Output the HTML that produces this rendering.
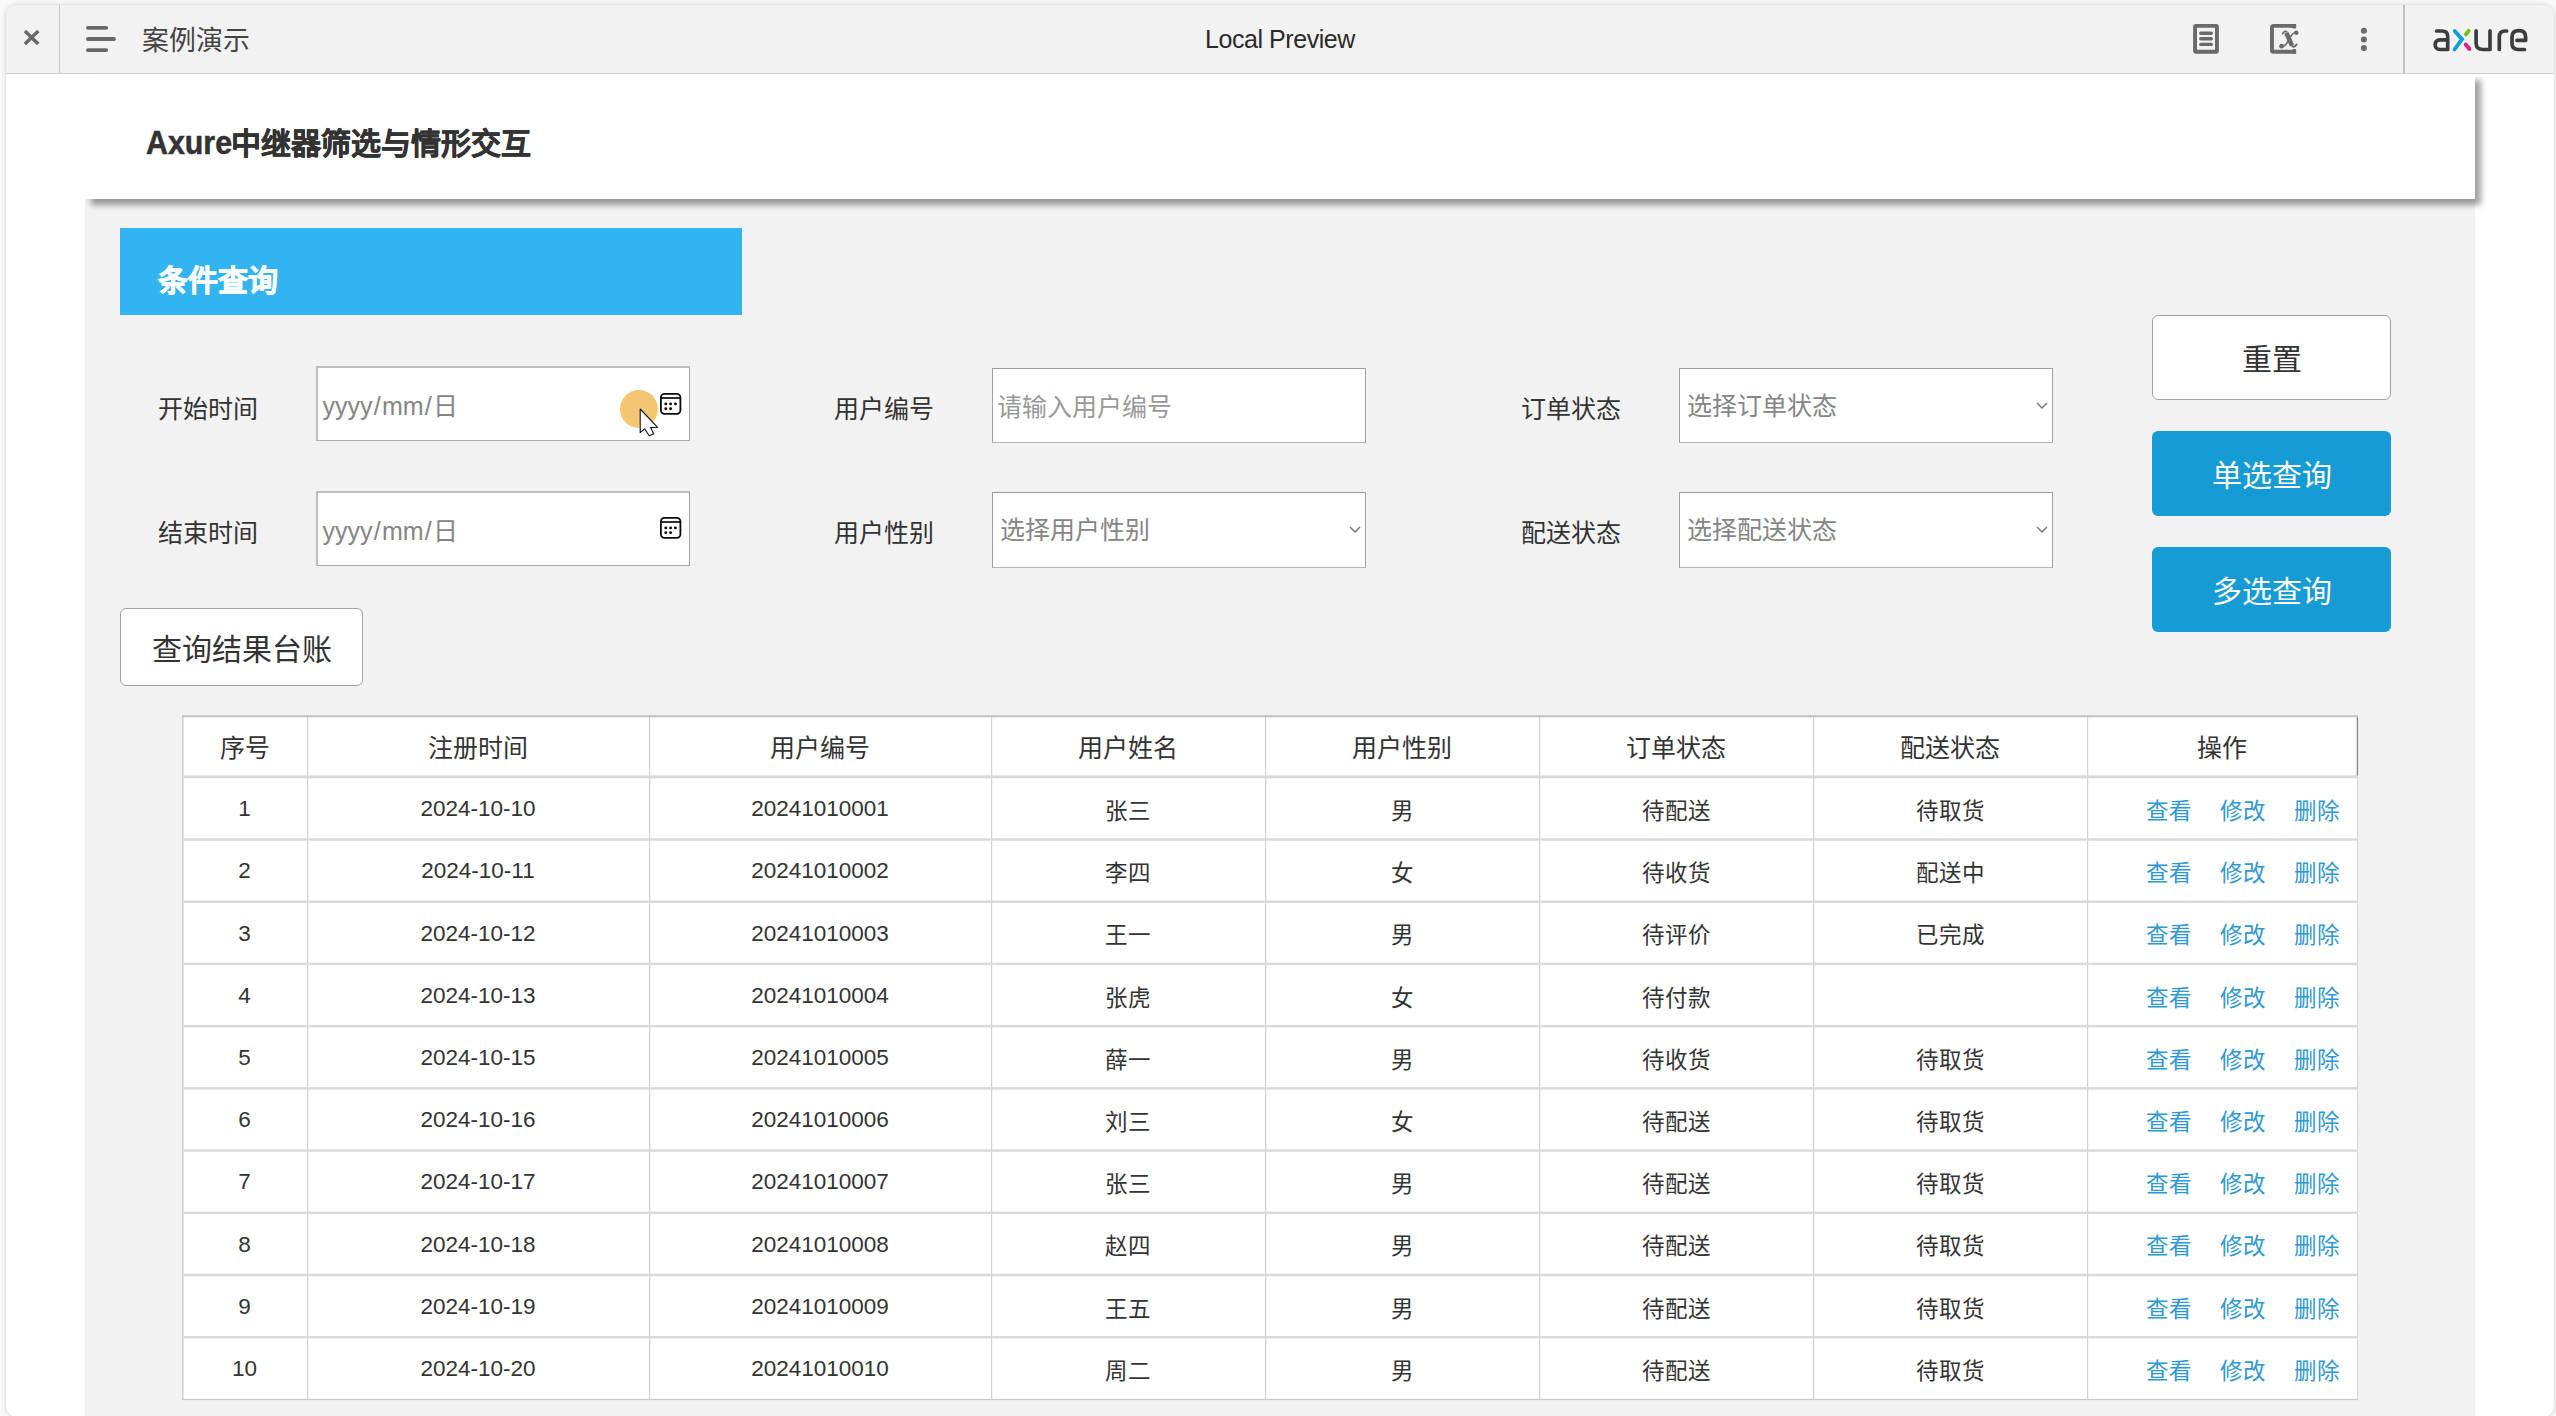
<!DOCTYPE html>
<html lang="zh-CN">
<head>
<meta charset="utf-8">
<title>案例演示</title>
<style>
*{box-sizing:border-box;margin:0;padding:0}
html,body{width:2556px;height:1416px;overflow:hidden}
body{background:#f9f9f9;font-family:"Liberation Sans",sans-serif;color:#333;position:relative}
.abs,.th,.td,.lk,.hl,.vl,.tbl,.lab,.inp,.btn{position:absolute}
#win{position:absolute;left:5px;top:4px;width:2550px;height:1413.5px;border:1px solid #e5e5e5;border-radius:12px;box-shadow:0 0 5px rgba(0,0,0,.10);background:#fff;overflow:hidden}
#bar{position:absolute;left:0;top:0;width:100%;height:69px;background:#f2f2f2;border-bottom:1px solid #cfcfcf}
#page{position:absolute;left:0;top:0;width:2556px;height:1416px}
.card{left:85px;top:74px;width:2390px;height:125px;background:#fff;box-shadow:6px 6px 6px rgba(0,0,0,.37)}
.panel{left:85px;top:199px;width:2390px;height:1217px;background:#f2f2f2}
.title{left:146px;top:124px;font-size:30px;font-weight:bold;color:#333;-webkit-text-stroke:.5px #333;line-height:40px;white-space:nowrap}
.blue{left:120px;top:228.4px;width:622px;height:86.9px;background:#31b4ef}
.blue span{position:absolute;left:38px;top:33px;font-size:30px;font-weight:bold;color:#fff;-webkit-text-stroke:.7px #fff;line-height:40px;white-space:nowrap}
.lab{font-size:25px;line-height:34px;color:#333;white-space:nowrap}
.inp{background:#fff;border:1px solid #a0a0a0;border-bottom:1.6px solid #b4b4b4;font-size:25px;color:#858585;white-space:nowrap}
.inp i{font-style:normal;margin:0 1.2px}
.inp span{position:absolute;top:50%;transform:translateY(-50%);line-height:34px}
.btn{border-radius:6px;font-size:30px;text-align:center;white-space:nowrap}
.btn.w{background:#fff;border:1px solid #a2a2a2;color:#333}
.btn.b{background:#169bd5;color:#fff}
.tbl{background:#fff}
.th{font-size:25px;line-height:59px;height:59px;text-align:center;color:#333;white-space:nowrap}
.td{font-size:22.5px;line-height:61px;height:61px;text-align:center;color:#333;white-space:nowrap}
.lk{font-size:22.5px;line-height:61px;height:61px;color:#2e98d2;white-space:nowrap}
.vl{width:1px}
.title b{display:inline-block;transform:scale(1.012,1.08);transform-origin:left 78%}
.inp.d{border:2px solid #bebebe;border-right:1.4px solid #a2a2a2;border-bottom:1.5px solid #ababab}
</style>
</head>
<body>
<div id="win">
<div id="bar"></div>
</div>
<div id="page">
<!-- toolbar -->
<div class="abs" style="left:59px;top:5px;width:1px;height:68px;background:#cbcbcb"></div>
<div class="abs" style="left:2403px;top:5px;width:1.5px;height:68px;background:#c2c2c2"></div>
<svg class="abs" style="left:20px;top:25px" width="24" height="24" viewBox="20 25 24 24"><path d="M24.9 31 L38.3 44.1 M38.3 31 L24.9 44.1" stroke="#6a6a6a" stroke-width="3.5" fill="none"/></svg>
<svg class="abs" style="left:85px;top:25px" width="32" height="28" viewBox="0 0 32 28"><path d="M2.9 2.8 H21.2 M2.9 14 H29 M2.9 25.1 H21.2" stroke="#696969" stroke-width="3.8" stroke-linecap="round" fill="none"/></svg>
<div class="abs" style="left:142px;top:22.8px;font-size:26.9px;line-height:36px;color:#444;white-space:nowrap">案例演示</div>
<div class="abs" style="left:1080px;top:21px;width:400px;text-align:center;font-size:25px;letter-spacing:-0.45px;line-height:36px;color:#2a2a2a;white-space:nowrap">Local Preview</div>
<!-- right icons -->
<svg class="abs" style="left:2192px;top:23px" width="28" height="32" viewBox="0 0 28 32"><rect x="3.05" y="2.85" width="21.9" height="25.9" rx="0.9" fill="none" stroke="#6a6a6a" stroke-width="3.9"/><path d="M8.8 10.2 H19.3 M8.8 15.8 H19.3 M8.8 21.4 H19.3" stroke="#6a6a6a" stroke-width="3.4" stroke-linecap="round"/></svg>
<svg class="abs" style="left:2269px;top:23px" width="34" height="32" viewBox="0 0 34 32"><path d="M27.1 2.85 H4.5 Q2.95 2.85 2.95 4.4 V27.2 Q2.95 28.75 4.5 28.75 H27.1" fill="none" stroke="#6a6a6a" stroke-width="3.9"/><rect x="23.4" y="0.9" width="3.7" height="4.7" rx="1" fill="#6a6a6a"/><rect x="23.4" y="26" width="3.7" height="4.7" rx="1" fill="#6a6a6a"/><g fill="none" stroke="#6a6a6a" stroke-linecap="round"><path d="M17.4 9.8 L23 22.6" stroke-width="4.6" stroke-linecap="butt"/><path d="M13.7 10.6 C14.6 8.6 16.2 8 17.6 8.6" stroke-width="1.7"/><path d="M22.6 22 C23.4 24.6 25.6 24.2 27.7 21.4" stroke-width="1.9"/><path d="M27 9.6 C24 8.6 22 13 20.2 16.3 C18.4 19.6 16 24.3 12.8 23.4" stroke-width="1.7"/></g><circle cx="27.3" cy="9.8" r="2.2" fill="#6a6a6a"/><circle cx="12.6" cy="23.2" r="2.4" fill="#6a6a6a"/></svg>
<svg class="abs" style="left:2358px;top:26px" width="12" height="28" viewBox="0 0 12 28"><circle cx="5.9" cy="4.8" r="3.05" fill="#6a6a6a"/><circle cx="5.9" cy="13.5" r="3.05" fill="#6a6a6a"/><circle cx="5.9" cy="22.1" r="3.05" fill="#6a6a6a"/></svg>
<!-- axure logo -->
<svg class="abs" style="left:2430px;top:24px" width="100" height="32" viewBox="0 0 100 32">
<g fill="none" stroke="#3d3d3d" stroke-width="3.7" stroke-linecap="round" stroke-linejoin="round">
<path d="M6.6 7 H12 C16 7 17.7 9 17.7 12.5 V25.5 H10 C3.5 25.5 3.5 15.8 10 15.8 H17.7"/>
<path d="M46.1 6.9 V19 C46.1 23.5 48 25.5 53 25.5 H60 V6.9"/>
<path d="M69.3 25.4 V13 C69.3 9 71 7 75 7 H76.6"/>
<path d="M87 16.4 H95.6 V13 C95.6 9 93.5 6.7 89 6.7 C84 6.7 82 9 82 13 V19.5 C82 23.5 84 25.5 88.5 25.5 H94.5"/>
</g>
<path d="M24.7 7 L32 15.2 L24.5 25.5" fill="none" stroke="#0f9fdb" stroke-width="3.8" stroke-linecap="round" stroke-linejoin="miter"/>
<path d="M38.6 6.9 L35.9 10.4" fill="none" stroke="#78be20" stroke-width="4" stroke-linecap="round"/>
<path d="M35.7 20.5 L39.4 24.9" fill="none" stroke="#e0218a" stroke-width="4" stroke-linecap="round"/>
</svg>

<!-- content -->
<div class="abs panel"></div>
<div class="abs card"></div>
<div class="abs title"><b>Axure</b>中继器筛选与情形交互</div>
<div class="abs blue"><span>条件查询</span></div>

<div class="lab" style="left:158px;top:392px">开始时间</div>
<div class="lab" style="left:158px;top:516px">结束时间</div>
<div class="lab" style="left:834px;top:392px">用户编号</div>
<div class="lab" style="left:834px;top:516px">用户性别</div>
<div class="lab" style="left:1521px;top:392px">订单状态</div>
<div class="lab" style="left:1521px;top:516px">配送状态</div>

<div class="inp d" style="left:316px;top:366px;width:374px;height:75px"><span style="left:4.6px;margin-top:2px">yyyy<i>/</i>mm<i>/</i>日</span></div>
<div class="inp d" style="left:316px;top:491px;width:374px;height:75px"><span style="left:4.6px;margin-top:2px">yyyy<i>/</i>mm<i>/</i>日</span></div>
<div class="inp" style="left:992px;top:368px;width:374px;height:75px;color:#999"><span style="left:4px;margin-top:1px">请输入用户编号</span></div>
<div class="inp" style="left:992px;top:492px;width:374px;height:76px"><span style="left:7px">选择用户性别</span></div>
<div class="inp" style="left:1679px;top:368px;width:374px;height:75px"><span style="left:7px">选择订单状态</span></div>
<div class="inp" style="left:1679px;top:492px;width:374px;height:76px"><span style="left:7px">选择配送状态</span></div>
<!-- chevrons -->
<svg class="abs" style="left:1348px;top:525px" width="14" height="9" viewBox="0 0 14 9"><path d="M2 2 L7 7 L12 2" fill="none" stroke="#777" stroke-width="1.5"/></svg>
<svg class="abs" style="left:2035px;top:401px" width="14" height="9" viewBox="0 0 14 9"><path d="M2 2 L7 7 L12 2" fill="none" stroke="#777" stroke-width="1.5"/></svg>
<svg class="abs" style="left:2035px;top:525px" width="14" height="9" viewBox="0 0 14 9"><path d="M2 2 L7 7 L12 2" fill="none" stroke="#777" stroke-width="1.5"/></svg>
<!-- calendar icons -->
<svg class="abs cal" style="left:658px;top:392px" width="24" height="24" viewBox="0 0 24 24"><rect x="2.9" y="1.9" width="19.5" height="20" rx="3.6" fill="none" stroke="#0a0a0a" stroke-width="1.8"/><path d="M2.9 6 H22.4" stroke="#0a0a0a" stroke-width="1.7"/><g fill="#0a0a0a"><circle cx="7.8" cy="11.9" r="1.45"/><circle cx="12.6" cy="11.9" r="1.45"/><circle cx="17.4" cy="11.9" r="1.45"/><circle cx="7.8" cy="16.7" r="1.45"/><circle cx="12.6" cy="16.7" r="1.45"/></g></svg>
<svg class="abs cal" style="left:658px;top:516px" width="24" height="24" viewBox="0 0 24 24"><rect x="2.9" y="1.9" width="19.5" height="20" rx="3.6" fill="none" stroke="#0a0a0a" stroke-width="1.8"/><path d="M2.9 6 H22.4" stroke="#0a0a0a" stroke-width="1.7"/><g fill="#0a0a0a"><circle cx="7.8" cy="11.9" r="1.45"/><circle cx="12.6" cy="11.9" r="1.45"/><circle cx="17.4" cy="11.9" r="1.45"/><circle cx="7.8" cy="16.7" r="1.45"/><circle cx="12.6" cy="16.7" r="1.45"/></g></svg>
<!-- cursor highlight -->
<div class="abs" style="left:620.1px;top:389.8px;width:38.2px;height:38.2px;border-radius:50%;background:#f5c671"></div>
<svg class="abs" style="left:638px;top:407px" width="22" height="32" viewBox="0 0 22 32"><path d="M2.2 2 V25.7 L6.6 21.8 L11.2 28.8 L15.7 26.8 L12.6 20.6 L19.6 20.3 Z" fill="#fff" stroke="#111" stroke-width="1.1" stroke-linejoin="round"/></svg>

<div class="btn w" style="left:2152px;top:315px;width:239px;height:85px;line-height:87px">重置</div>
<div class="btn b" style="left:2152px;top:431px;width:239px;height:85px;line-height:89px">单选查询</div>
<div class="btn b" style="left:2152px;top:547px;width:239px;height:85px;line-height:89px">多选查询</div>
<div class="btn w" style="left:120px;top:608px;width:243px;height:78px;line-height:82px">查询结果台账</div>
<div class="tbl" style="left:182px;top:715px;width:2176px;height:684.5px"></div>
<svg class="abs" style="left:180px;top:713px" width="2180" height="690" viewBox="0 0 2180 690"><rect x="2.00" y="2.0" width="1.60" height="685.0" fill="#d0d0d0"/><rect x="127.00" y="2.0" width="1.20" height="685.0" fill="#d2d2d2"/><rect x="469.00" y="2.0" width="1.20" height="685.0" fill="#d2d2d2"/><rect x="811.00" y="2.0" width="1.20" height="685.0" fill="#d2d2d2"/><rect x="1085.00" y="2.0" width="1.20" height="685.0" fill="#d2d2d2"/><rect x="1359.00" y="2.0" width="1.20" height="685.0" fill="#d2d2d2"/><rect x="1633.00" y="2.0" width="1.20" height="685.0" fill="#d2d2d2"/><rect x="1907.00" y="2.0" width="1.20" height="685.0" fill="#d2d2d2"/><rect x="2176.95" y="63.8" width="1.10" height="623.2" fill="#d4d4d4"/><rect x="2176.78" y="2.6" width="1.25" height="61.8" fill="#828282"/><rect x="2.0" y="2.10" width="2176.0" height="2.20" fill="#c6c6c6"/><rect x="2.0" y="62.35" width="2176.0" height="2.90" fill="#d8d8d8"/><rect x="2.0" y="125.25" width="2176.0" height="2.50" fill="#dadada"/><rect x="2.0" y="187.47" width="2176.0" height="2.50" fill="#dadada"/><rect x="2.0" y="249.69" width="2176.0" height="2.50" fill="#dadada"/><rect x="2.0" y="311.91" width="2176.0" height="2.50" fill="#dadada"/><rect x="2.0" y="374.13" width="2176.0" height="2.50" fill="#dadada"/><rect x="2.0" y="436.35" width="2176.0" height="2.50" fill="#dadada"/><rect x="2.0" y="498.57" width="2176.0" height="2.50" fill="#dadada"/><rect x="2.0" y="560.79" width="2176.0" height="2.50" fill="#dadada"/><rect x="2.0" y="623.01" width="2176.0" height="2.50" fill="#dadada"/><rect x="2.0" y="685.85" width="2176.0" height="1.30" fill="#cccccc"/></svg>
<div class="th" style="left:182px;top:719px;width:125px">序号</div>
<div class="th" style="left:307px;top:719px;width:342px">注册时间</div>
<div class="th" style="left:649px;top:719px;width:342px">用户编号</div>
<div class="th" style="left:991px;top:719px;width:274px">用户姓名</div>
<div class="th" style="left:1265px;top:719px;width:274px">用户性别</div>
<div class="th" style="left:1539px;top:719px;width:274px">订单状态</div>
<div class="th" style="left:1813px;top:719px;width:274px">配送状态</div>
<div class="th" style="left:2087px;top:719px;width:270px">操作</div>
<div class="td" style="left:182px;top:777.9px;width:125px">1</div>
<div class="td" style="left:307px;top:777.9px;width:342px">2024-10-10</div>
<div class="td" style="left:649px;top:777.9px;width:342px">20241010001</div>
<div class="td" style="left:991px;top:780.6px;width:274px">张三</div>
<div class="td" style="left:1265px;top:780.6px;width:274px">男</div>
<div class="td" style="left:1539px;top:780.6px;width:274px">待配送</div>
<div class="td" style="left:1813px;top:780.6px;width:274px">待取货</div>
<div class="lk" style="left:2146px;top:780.6px">查看</div>
<div class="lk" style="left:2220px;top:780.6px">修改</div>
<div class="lk" style="left:2294px;top:780.6px">删除</div>
<div class="td" style="left:182px;top:840.3px;width:125px">2</div>
<div class="td" style="left:307px;top:840.3px;width:342px">2024-10-11</div>
<div class="td" style="left:649px;top:840.3px;width:342px">20241010002</div>
<div class="td" style="left:991px;top:843.1px;width:274px">李四</div>
<div class="td" style="left:1265px;top:843.1px;width:274px">女</div>
<div class="td" style="left:1539px;top:843.1px;width:274px">待收货</div>
<div class="td" style="left:1813px;top:843.1px;width:274px">配送中</div>
<div class="lk" style="left:2146px;top:843.1px">查看</div>
<div class="lk" style="left:2220px;top:843.1px">修改</div>
<div class="lk" style="left:2294px;top:843.1px">删除</div>
<div class="td" style="left:182px;top:902.5px;width:125px">3</div>
<div class="td" style="left:307px;top:902.5px;width:342px">2024-10-12</div>
<div class="td" style="left:649px;top:902.5px;width:342px">20241010003</div>
<div class="td" style="left:991px;top:905.3px;width:274px">王一</div>
<div class="td" style="left:1265px;top:905.3px;width:274px">男</div>
<div class="td" style="left:1539px;top:905.3px;width:274px">待评价</div>
<div class="td" style="left:1813px;top:905.3px;width:274px">已完成</div>
<div class="lk" style="left:2146px;top:905.3px">查看</div>
<div class="lk" style="left:2220px;top:905.3px">修改</div>
<div class="lk" style="left:2294px;top:905.3px">删除</div>
<div class="td" style="left:182px;top:964.8px;width:125px">4</div>
<div class="td" style="left:307px;top:964.8px;width:342px">2024-10-13</div>
<div class="td" style="left:649px;top:964.8px;width:342px">20241010004</div>
<div class="td" style="left:991px;top:967.6px;width:274px">张虎</div>
<div class="td" style="left:1265px;top:967.6px;width:274px">女</div>
<div class="td" style="left:1539px;top:967.6px;width:274px">待付款</div>
<div class="lk" style="left:2146px;top:967.6px">查看</div>
<div class="lk" style="left:2220px;top:967.6px">修改</div>
<div class="lk" style="left:2294px;top:967.6px">删除</div>
<div class="td" style="left:182px;top:1027.0px;width:125px">5</div>
<div class="td" style="left:307px;top:1027.0px;width:342px">2024-10-15</div>
<div class="td" style="left:649px;top:1027.0px;width:342px">20241010005</div>
<div class="td" style="left:991px;top:1029.8px;width:274px">薛一</div>
<div class="td" style="left:1265px;top:1029.8px;width:274px">男</div>
<div class="td" style="left:1539px;top:1029.8px;width:274px">待收货</div>
<div class="td" style="left:1813px;top:1029.8px;width:274px">待取货</div>
<div class="lk" style="left:2146px;top:1029.8px">查看</div>
<div class="lk" style="left:2220px;top:1029.8px">修改</div>
<div class="lk" style="left:2294px;top:1029.8px">删除</div>
<div class="td" style="left:182px;top:1089.2px;width:125px">6</div>
<div class="td" style="left:307px;top:1089.2px;width:342px">2024-10-16</div>
<div class="td" style="left:649px;top:1089.2px;width:342px">20241010006</div>
<div class="td" style="left:991px;top:1092.0px;width:274px">刘三</div>
<div class="td" style="left:1265px;top:1092.0px;width:274px">女</div>
<div class="td" style="left:1539px;top:1092.0px;width:274px">待配送</div>
<div class="td" style="left:1813px;top:1092.0px;width:274px">待取货</div>
<div class="lk" style="left:2146px;top:1092.0px">查看</div>
<div class="lk" style="left:2220px;top:1092.0px">修改</div>
<div class="lk" style="left:2294px;top:1092.0px">删除</div>
<div class="td" style="left:182px;top:1151.4px;width:125px">7</div>
<div class="td" style="left:307px;top:1151.4px;width:342px">2024-10-17</div>
<div class="td" style="left:649px;top:1151.4px;width:342px">20241010007</div>
<div class="td" style="left:991px;top:1154.2px;width:274px">张三</div>
<div class="td" style="left:1265px;top:1154.2px;width:274px">男</div>
<div class="td" style="left:1539px;top:1154.2px;width:274px">待配送</div>
<div class="td" style="left:1813px;top:1154.2px;width:274px">待取货</div>
<div class="lk" style="left:2146px;top:1154.2px">查看</div>
<div class="lk" style="left:2220px;top:1154.2px">修改</div>
<div class="lk" style="left:2294px;top:1154.2px">删除</div>
<div class="td" style="left:182px;top:1213.6px;width:125px">8</div>
<div class="td" style="left:307px;top:1213.6px;width:342px">2024-10-18</div>
<div class="td" style="left:649px;top:1213.6px;width:342px">20241010008</div>
<div class="td" style="left:991px;top:1216.4px;width:274px">赵四</div>
<div class="td" style="left:1265px;top:1216.4px;width:274px">男</div>
<div class="td" style="left:1539px;top:1216.4px;width:274px">待配送</div>
<div class="td" style="left:1813px;top:1216.4px;width:274px">待取货</div>
<div class="lk" style="left:2146px;top:1216.4px">查看</div>
<div class="lk" style="left:2220px;top:1216.4px">修改</div>
<div class="lk" style="left:2294px;top:1216.4px">删除</div>
<div class="td" style="left:182px;top:1275.9px;width:125px">9</div>
<div class="td" style="left:307px;top:1275.9px;width:342px">2024-10-19</div>
<div class="td" style="left:649px;top:1275.9px;width:342px">20241010009</div>
<div class="td" style="left:991px;top:1278.7px;width:274px">王五</div>
<div class="td" style="left:1265px;top:1278.7px;width:274px">男</div>
<div class="td" style="left:1539px;top:1278.7px;width:274px">待配送</div>
<div class="td" style="left:1813px;top:1278.7px;width:274px">待取货</div>
<div class="lk" style="left:2146px;top:1278.7px">查看</div>
<div class="lk" style="left:2220px;top:1278.7px">修改</div>
<div class="lk" style="left:2294px;top:1278.7px">删除</div>
<div class="td" style="left:182px;top:1338.1px;width:125px">10</div>
<div class="td" style="left:307px;top:1338.1px;width:342px">2024-10-20</div>
<div class="td" style="left:649px;top:1338.1px;width:342px">20241010010</div>
<div class="td" style="left:991px;top:1340.9px;width:274px">周二</div>
<div class="td" style="left:1265px;top:1340.9px;width:274px">男</div>
<div class="td" style="left:1539px;top:1340.9px;width:274px">待配送</div>
<div class="td" style="left:1813px;top:1340.9px;width:274px">待取货</div>
<div class="lk" style="left:2146px;top:1340.9px">查看</div>
<div class="lk" style="left:2220px;top:1340.9px">修改</div>
<div class="lk" style="left:2294px;top:1340.9px">删除</div></div>
</body>
</html>
